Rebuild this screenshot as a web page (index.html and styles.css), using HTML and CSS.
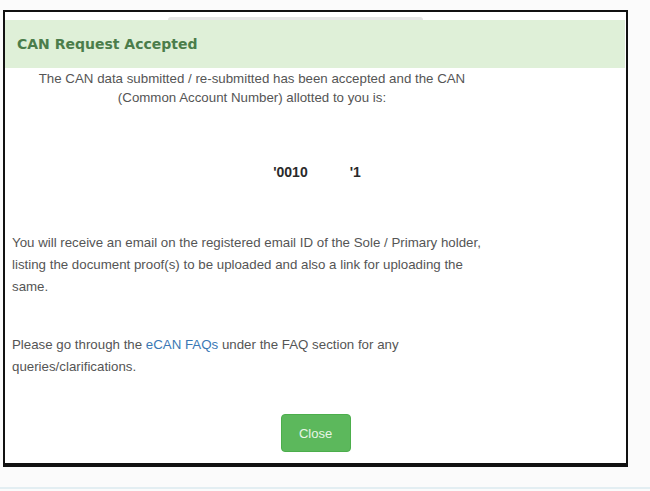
FILE: index.html
```html
<!DOCTYPE html>
<html lang="en">
<head>
  <meta charset="UTF-8">
  <title>CAN Request Accepted</title>
  <link rel="stylesheet" href="styles.css">
</head>
<body>
  <div class="page">
    <div class="modal">
      <div class="strip"><div class="tab"></div></div>
      <div class="modal_head">CAN Request Accepted</div>
      <div class="modal_body">
        <p class="center">The CAN data submitted / re-submitted has been accepted and the CAN<br>(Common Account Number) allotted to you is:</p>
        <p class="can_no"><span>'0010</span><span class="blank"></span><span>'1</span></p>
        <p class="info">You will receive an email on the registered email ID of the Sole / Primary holder, listing the document proof(s) to be uploaded and also a link for uploading the same.</p>
        <p class="info">Please go through the <a href="#">eCAN FAQs</a> under the FAQ section for any queries/clarifications.</p>
      </div>
      <div class="modal_foot">
        <button class="btn_close">Close</button>
      </div>
    </div>
  </div>
</body>
</html>
```

FILE: styles.css
```css
body {
  margin: 0;
  background: #fbfbfb;
  font-family: "Liberation Sans", Arial, sans-serif;
  height: 491px;
  overflow: hidden;
  position: relative;
}
.page {
  padding: 10px 0 0 3px;
}
.modal {
  width: 621px;
  background: #fff;
  border: 2px solid #111;
  border-bottom-width: 4px;
}
.strip {
  height: 8px;
  background: #fff;
  display: flex;
  justify-content: center;
}
.tab {
  width: 255px;
  height: 3px;
  margin-top: 5px;
  margin-right: 40px;
  background: #e6e6e6;
  border-radius: 3px 3px 0 0;
}
.modal_head {
  height: 48px;
  line-height: 48px;
  background: #dff0d8;
  color: #4b7d4b;
  font-family: "DejaVu Sans", Verdana, sans-serif;
  font-weight: bold;
  font-size: 14px;
  padding-left: 12px;
  margin-right: 1px;
}
.modal_body {
  width: 480px;
  padding: 0 0 0 7px;
  color: #555;
  font-size: 13.3px;
}
.center {
  text-align: center;
  line-height: 19px;
  margin: 0;
  padding-top: 1px;
}
.can_no {
  text-align: center;
  font-weight: bold;
  font-size: 14px;
  color: #2a2a2a;
  margin: 57px 0 0 0;
  padding-left: 130px;
  display: flex;
  justify-content: center;
}
.blank {
  width: 42px;
}
.info {
  line-height: 22px;
  margin: 0;
}
.can_no + .info {
  margin-top: 52px;
}
.info + .info {
  margin-top: 36px;
}
a {
  color: #3a78b5;
  text-decoration: none;
}
.modal_foot {
  display: flex;
  justify-content: center;
  padding: 36px 0 11px 0;
}
.btn_close {
  background: #5cb85c;
  border: 1px solid #4cae4c;
  border-radius: 4px;
  color: #e8f5e6;
  font-family: "Liberation Sans", Arial, sans-serif;
  font-size: 13px;
  width: 70px;
  height: 38px;
}
.page::after {
  content: "";
  position: absolute;
  left: 0;
  right: 0;
  top: 487px;
  height: 2px;
  background: #e3eef2;
}
```
